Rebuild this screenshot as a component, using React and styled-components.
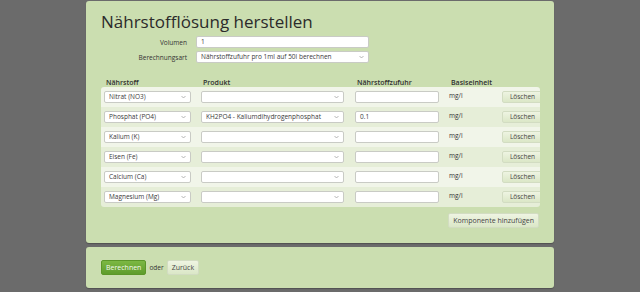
import React from "react";
import styled, { createGlobalStyle } from "styled-components";

const Global = createGlobalStyle`
  html, body { margin: 0; padding: 0; background: #6b6b6b; }
  body { font-family: "Open Sans", "Liberation Sans", sans-serif; color: #333; }
`;

const Page = styled.div`
  width: 640px;
  height: 292px;
  display: flex;
  flex-direction: column;
  align-items: center;
  padding-top: 1px;
  gap: 4px;
  box-sizing: border-box;
  background: #6b6b6b;
  overflow: hidden;
`;

const Panel = styled.div`
  width: 468px;
  box-sizing: border-box;
  background: #cbdeb0;
  border-radius: 3px;
  box-shadow: 0 1px 1px rgba(0,0,0,0.25);
  padding: ${p => p.$pad};
`;

const Title = styled.h1`
  margin: 0 0 4px 0;
  font-size: 17px;
  font-weight: 500;
  line-height: 20px;
  color: #2b2b2b;
`;

const FormRow = styled.div`
  display: flex;
  align-items: center;
  gap: 9px;
  margin-bottom: 3px;
`;

const Label = styled.label`
  width: 86px;
  text-align: right;
  font-size: 6.5px;
  color: #333;
`;

const TextInput = styled.div`
  width: ${p => p.$w}px;
  height: 12px;
  box-sizing: border-box;
  background: #fff;
  border: 1px solid #c9cbc5;
  border-radius: 2px;
  font-size: 6.5px;
  line-height: 10px;
  padding: 0 4px;
  color: #3a3a3a;
  display: flex;
  align-items: center;
  justify-content: space-between;
  white-space: nowrap;
`;

const Chevron = () => (
  <svg width="5" height="4" viewBox="0 0 5 4">
    <path d="M0.5 1 L2.5 3 L4.5 1" stroke="#999" strokeWidth="0.7" fill="none" />
  </svg>
);

const Select = ({ w, children }) => (
  <TextInput $w={w}>
    <span>{children}</span>
    <Chevron />
  </TextInput>
);

const Table = styled.div`
  margin-top: 14px;
`;

const Grid = styled.div`
  display: grid;
  grid-template-columns: 97px 154px 94px 53px 41px;
  align-items: center;
`;

const Head = styled(Grid)`
  padding: 0 0 0 5px;
  font-size: 7px;
  font-weight: 600;
  color: #2f2f2f;
  height: 10px;
`;

const Body = styled.div`
  border-radius: 3px;
  overflow: hidden;
  width: 439px;
`;

const Row = styled(Grid)`
  height: 20px;
  padding-left: 3px;
  background: ${p => (p.$alt ? "#e6eed8" : "#f1f5e9")};
`;

const Unit = styled.span`
  font-size: 6.5px;
  color: #333;
  margin-top: -3px;
`;

const Button = styled.button`
  font-family: inherit;
  font-size: ${p => p.$fs || 6.5}px;
  height: ${p => p.$h || 12}px;
  padding: 0 ${p => p.$px || 4}px;
  border: 1px solid #d2dcc2;
  border-radius: 2px;
  background: linear-gradient(#eef4e2, #dbe7c7);
  color: #444;
  cursor: pointer;
  line-height: 1;
  white-space: nowrap;
`;

const Primary = styled(Button)`
  border: 1px solid #5b9628;
  background: linear-gradient(#7cb843, #5e9c2b);
  color: #f4f9ee;
`;

const Footer = styled.div`
  display: flex;
  justify-content: flex-end;
  margin-top: 6px;
  padding-right: 1px;
`;

const Actions = styled.div`
  display: flex;
  align-items: center;
  gap: 3px;
  font-size: 6.5px;
`;

const rows = [
  { n: "Nitrat (NO3)", p: "", v: "" },
  { n: "Phosphat (PO4)", p: "KH2PO4 - Kaliumdihydrogenphosphat", v: "0.1" },
  { n: "Kalium (K)", p: "", v: "" },
  { n: "Eisen (Fe)", p: "", v: "" },
  { n: "Calcium (Ca)", p: "", v: "" },
  { n: "Magnesium (Mg)", p: "", v: "" },
];

export default function App() {
  return (
    <>
      <Global />
      <Page>
        <Panel $pad="11px 14px 15px 15px">
          <Title>Nährstofflösung herstellen</Title>
          <FormRow>
            <Label>Volumen</Label>
            <TextInput $w={173}>1</TextInput>
          </FormRow>
          <FormRow>
            <Label>Berechnungsart</Label>
            <Select w={173}>Nährstoffzufuhr pro 1ml auf 50l berechnen</Select>
          </FormRow>
          <Table>
            <Head>
              <span>Nährstoff</span>
              <span>Produkt</span>
              <span>Nährstoffzufuhr</span>
              <span>Basiseinheit</span>
              <span />
            </Head>
            <Body>
              {rows.map((r, i) => (
                <Row key={i} $alt={i % 2 === 1}>
                  <Select w={87}>{r.n}</Select>
                  <Select w={143}>{r.p}</Select>
                  <TextInput $w={84}>{r.v}</TextInput>
                  <Unit>mg/l</Unit>
                  <Button $px={3}>Löschen</Button>
                </Row>
              ))}
            </Body>
            <Footer>
              <Button $h={15} $fs={7} $px={4}>Komponente hinzufügen</Button>
            </Footer>
          </Table>
        </Panel>
        <Panel $pad="13px 15px 13px 15px">
          <Actions>
            <Primary $h={15} $fs={7}>Berechnen</Primary>
            <span>oder</span>
            <Button $h={15} $fs={7}>Zurück</Button>
          </Actions>
        </Panel>
      </Page>
    </>
  );
}
